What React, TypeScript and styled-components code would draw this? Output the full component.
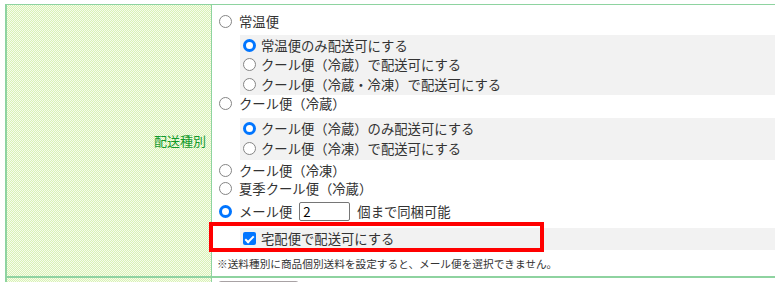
import React from 'react'
import styled, { createGlobalStyle } from 'styled-components'

const GlobalStyle = createGlobalStyle`
  html, body {
    margin: 0;
    padding: 0;
    background: #fff;
    overflow: hidden;
  }
  body {
    font-family: "Noto Sans CJK JP", "Noto Sans", sans-serif;
    color: #333;
  }
`

const lineGreen = '#8ed3a0'
const blue = '#0075ff'

const Page = styled.div`
  padding: 4px 0 0 5px;
  height: 278px;
  overflow: hidden;
`

const Row = styled.div<{ $last?: boolean }>`
  display: flex;
  border-left: 2px solid ${lineGreen};
  border-top: 1px solid ${lineGreen};
  ${(p) => (p.$last ? '' : `border-bottom: 1px solid ${lineGreen};`)}
`

const LabelCell = styled.div`
  width: 199px;
  flex-shrink: 0;
  border-right: 1px solid ${lineGreen};
  background: repeating-conic-gradient(#d9f2b5 0% 25%, #f6fcec 0% 50%) 0 0 / 2px 2px;
  display: flex;
  align-items: center;
  justify-content: flex-end;
  padding-right: 5px;
  font-size: 13px;
  color: #119a2c;
`

const FieldCell = styled.div`
  flex: 1;
  min-width: 0;
  padding: 7px 0 4px 5px;
  font-size: 13.33px;
`

const Radio = styled.input.attrs({ type: 'radio' })`
  appearance: none;
  flex-shrink: 0;
  width: 13px;
  height: 13px;
  margin: 0;
  box-sizing: border-box;
  border-radius: 50%;
  border: 1px solid #858585;
  background: #fff;
  &:checked {
    border: 3.5px solid ${blue};
  }
`

const CheckBox = styled.input.attrs({ type: 'checkbox' })`
  appearance: none;
  position: relative;
  flex-shrink: 0;
  width: 13px;
  height: 13px;
  margin: 0 5px 0 0;
  border-radius: 2px;
  background: ${blue};
  &::after {
    content: '';
    position: absolute;
    left: 4px;
    top: 1.5px;
    width: 3px;
    height: 7px;
    border: solid #fff;
    border-width: 0 2px 2px 0;
    transform: rotate(45deg);
  }
`

const Option = styled.label<{ $h?: number; $mt?: number }>`
  display: flex;
  align-items: center;
  height: ${(p) => p.$h ?? 18}px;
  margin-top: ${(p) => p.$mt ?? 0}px;
  white-space: nowrap;
  ${Radio} {
    margin: 0 7px 0 2px;
  }
`

const SubGroup = styled.div<{ $pad: number }>`
  margin: 5px 0 0 23px;
  padding: ${(p) => p.$pad}px 0 ${(p) => p.$pad}px 3px;
  background: #f2f2f2;
`

const SubOption = styled.label`
  display: flex;
  align-items: center;
  height: 19.5px;
  white-space: nowrap;
  ${Radio} {
    margin: 0 5px 0 0;
  }
`

const CountInput = styled.input`
  width: 51px;
  height: 19px;
  box-sizing: border-box;
  margin: 0 7px;
  padding: 0 3px;
  border: 1px solid #767676;
  border-radius: 2px;
  font: 13.33px "Noto Sans CJK JP", sans-serif;
  color: #000;
`

const CheckRow = styled.div`
  position: relative;
  margin: 4px 0 0 23px;
  padding-left: 3px;
  height: 22px;
  display: flex;
  align-items: center;
  background: #f2f2f2;
`

const Highlight = styled.div`
  position: absolute;
  left: -31px;
  top: -6px;
  width: 335px;
  height: 30px;
  box-sizing: border-box;
  border: 4px solid #ff0000;
  pointer-events: none;
`

const Note = styled.div`
  margin-top: 6px;
  line-height: 16px;
  font-size: 10.67px;
  white-space: nowrap;
`

const ButtonCell = styled.div`
  flex: 1;
  padding: 3px 0 0 6px;
  height: 2px;
  overflow: hidden;
`

const SubmitButton = styled.div`
  width: 79px;
  height: 24px;
  border: 1px solid #a8a2a4;
  border-radius: 3px;
  background: #f4f4f4;
`

const App = () => {
  return (
    <>
      <GlobalStyle />
      <Page>
        <Row>
          <LabelCell>配送種別</LabelCell>
          <FieldCell>
            <Option>
              <Radio name="ship" />
              常温便
            </Option>
            <SubGroup $pad={0.5}>
              <SubOption>
                <Radio name="normal" defaultChecked />
                常温便のみ配送可にする
              </SubOption>
              <SubOption>
                <Radio name="normal" />
                クール便（冷蔵）で配送可にする
              </SubOption>
              <SubOption>
                <Radio name="normal" />
                クール便（冷蔵・冷凍）で配送可にする
              </SubOption>
            </SubGroup>
            <Option>
              <Radio name="ship" />
              クール便（冷蔵）
            </Option>
            <SubGroup $pad={1.5}>
              <SubOption>
                <Radio name="cool" defaultChecked />
                クール便（冷蔵）のみ配送可にする
              </SubOption>
              <SubOption>
                <Radio name="cool" />
                クール便（冷凍）で配送可にする
              </SubOption>
            </SubGroup>
            <Option $mt={2}>
              <Radio name="ship" />
              クール便（冷凍）
            </Option>
            <Option>
              <Radio name="ship" />
              夏季クール便（冷蔵）
            </Option>
            <Option $h={24} $mt={2}>
              <Radio name="ship" defaultChecked />
              メール便
              <CountInput type="text" defaultValue="2" />
              個まで同梱可能
            </Option>
            <CheckRow>
              <CheckBox defaultChecked />
              宅配便で配送可にする
              <Highlight />
            </CheckRow>
            <Note>※送料種別に商品個別送料を設定すると、メール便を選択できません。</Note>
          </FieldCell>
        </Row>
        <Row $last>
          <LabelCell />
          <ButtonCell>
            <SubmitButton />
          </ButtonCell>
        </Row>
      </Page>
    </>
  )
}

export default App
